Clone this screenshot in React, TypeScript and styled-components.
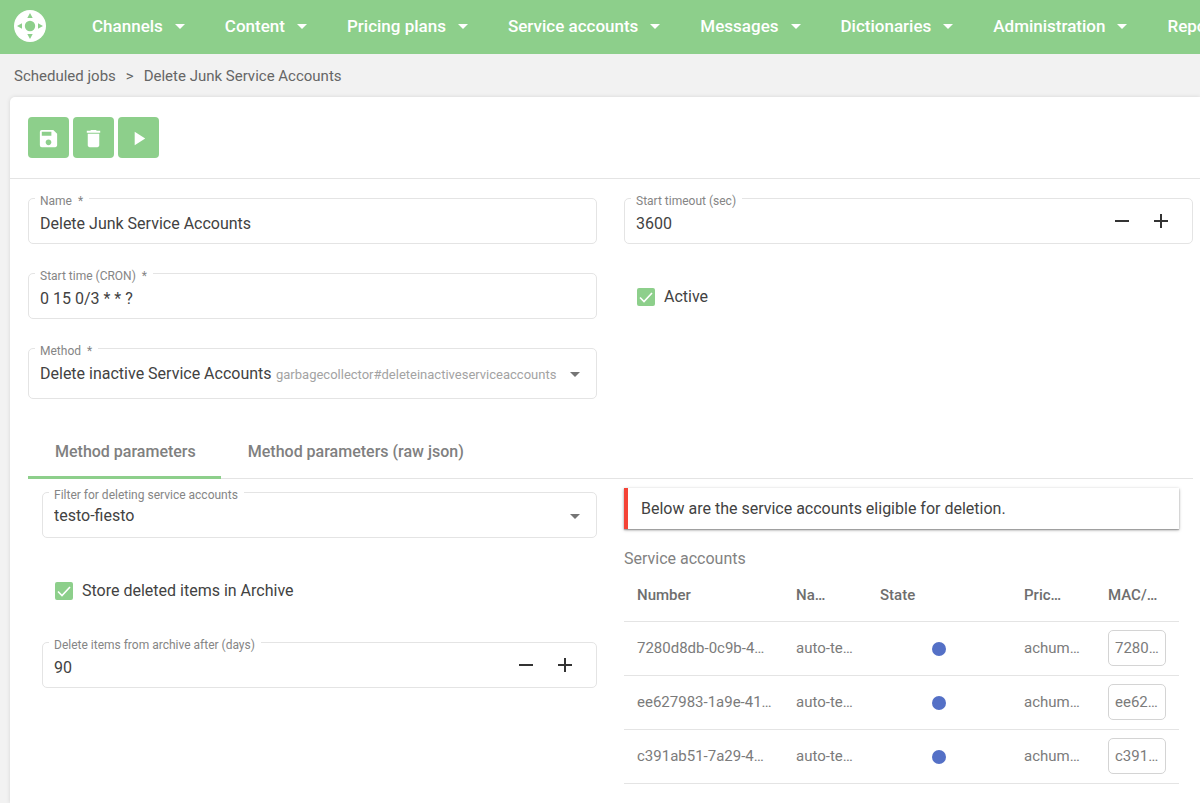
import React from 'react';
import styled, { createGlobalStyle } from 'styled-components';
import { MdSave, MdDelete, MdPlayArrow } from 'react-icons/md';

const green = '#8dcf8b';
const line = '#e4e4e4';
const ink = '#424242';
const muted = '#7b7b7b';

const GlobalStyle = createGlobalStyle`
  *, *::before, *::after { box-sizing: border-box; }
  body {
    margin: 0;
    background: #f2f2f2;
    color: ${ink};
    font-family: Roboto, "Liberation Sans", sans-serif;
    font-size: 16px;
    line-height: 24px;
  }
  button, input, select { font: inherit; color: inherit; }
`;

const Page = styled.div`
  min-height: 100vh;
  display: flex;
  flex-direction: column;
`;

const Header = styled.header`
  height: 54px;
  padding: 0 0 3px 14px;
  display: flex;
  align-items: center;
  gap: 46px;
  overflow: hidden;
  background: ${green};
`;

const HomeLink = styled.a`
  flex: none;
  display: flex;
`;

const Nav = styled.nav`
  display: flex;
  gap: 40px;
`;

const NavButton = styled.button`
  flex: none;
  display: flex;
  align-items: center;
  gap: 12px;
  padding: 0;
  border: 0;
  background: none;
  color: #fff;
  font-size: 17px;
  font-weight: 500;
  white-space: nowrap;
  cursor: pointer;
`;

const Caret = styled.span`
  flex: none;
  margin-top: 2px;
  border: 5px solid transparent;
  border-bottom: 0;
  border-top-color: currentColor;
  pointer-events: none;
`;

const Breadcrumb = styled.nav`
  display: flex;
  gap: 10px;
  padding: 10px 14px 9px;
  font-size: 15px;
  color: #666;
`;

const CrumbLink = styled.a`
  color: inherit;
  text-decoration: none;
`;

const Card = styled.main`
  flex: 1;
  margin-left: 10px;
  background: #fff;
  border-top-left-radius: 5px;
  box-shadow: 0 0 4px rgba(0, 0, 0, 0.12);
`;

const Toolbar = styled.div`
  display: flex;
  gap: 4px;
  padding: 20px 18px;
  border-bottom: 1px solid ${line};
`;

const ToolButton = styled.button`
  width: 41px;
  height: 41px;
  padding: 2px 0 0;
  display: flex;
  align-items: center;
  justify-content: center;
  border: 0;
  border-radius: 4px;
  background: ${green};
  color: #fff;
  cursor: pointer;
`;

const Columns = styled.div`
  display: grid;
  grid-template-columns: 1fr 1fr;
  gap: 27px;
`;

const FormGrid = styled(Columns)`
  padding: 19px 7px 0 18px;
`;

const Stack = styled.div`
  display: flex;
  flex-direction: column;
  gap: 29px;
  min-width: 0;
`;

const Box = styled.div<{ $tall?: boolean }>`
  position: relative;
  display: flex;
  align-items: center;
  height: ${p => (p.$tall ? 51 : 46)}px;
  padding: 0 12px 0 11px;
  border: 1px solid ${line};
  border-radius: 5px;
`;

const FloatingLabel = styled.label`
  position: absolute;
  top: -6px;
  left: 6px;
  padding: 0 6px 0 5px;
  background: #fff;
  color: #858585;
  font-size: 12px;
  line-height: 16px;
  white-space: pre;
`;

const TextInput = styled.input`
  flex: 1;
  min-width: 0;
  height: 100%;
  padding: 4px 0 0;
  border: 0;
  outline: 0;
  background: none;
  appearance: textfield;
  &::-webkit-inner-spin-button { display: none; }
`;

const Select = styled.select<{ $grow?: boolean }>`
  flex: ${p => (p.$grow ? 1 : 'none')};
  min-width: 0;
  height: 100%;
  padding: ${p => (p.$grow ? '2px 0 0' : 0)};
  border: 0;
  outline: 0;
  background: none;
  appearance: none;
`;

const Hint = styled.span`
  flex: 1;
  min-width: 0;
  padding: 2px 0 0 4px;
  color: #a3a3a3;
  font-size: 13px;
  white-space: nowrap;
`;

const SelectCaret = styled(Caret)`
  margin-right: 4px;
  color: #757575;
`;

const StepButton = styled.button`
  width: 39px;
  height: 40px;
  padding: 0;
  display: flex;
  align-items: center;
  justify-content: center;
  border: 0;
  background: none;
  cursor: pointer;
`;

const CheckLabel = styled.label`
  align-self: flex-start;
  display: grid;
  grid-template-columns: 18px auto;
  align-items: center;
  column-gap: 9px;
  height: 46px;
  padding: 2px 0 0 13px;
`;

const CheckBox = styled.input`
  grid-area: 1 / 1;
  appearance: none;
  width: 18px;
  height: 18px;
  margin: 0;
  border: 2px solid ${green};
  border-radius: 2px;
  &:checked { background: ${green}; }
  &:not(:checked) + svg { display: none; }
`;

const CheckMark = styled.svg`
  grid-area: 1 / 1;
  pointer-events: none;
`;

const Tabs = styled.div`
  display: flex;
  margin: 25px 7px 0 18px;
  border-bottom: 1px solid ${line};
`;

const Tab = styled.button<{ $active?: boolean }>`
  height: 55px;
  margin-bottom: -1px;
  padding: 3px 25px 0 27px;
  border: 0;
  border-bottom: 3px solid ${p => (p.$active ? green : 'transparent')};
  background: none;
  color: #808080;
  font-weight: 500;
  white-space: nowrap;
  cursor: pointer;
`;

const TabPanel = styled(Columns)`
  padding: 9px 7px 18px 18px;
`;

const ParameterStack = styled(Stack)`
  padding: 4px 0 0 14px;
`;

const Results = styled.section`
  min-width: 0;
  padding-right: 14px;
`;

const Notice = styled.p`
  margin: 0;
  padding: 9px 13px 8px;
  border-left: 4px solid #f44336;
  background: #fff;
  box-shadow: 0 1px 3px rgba(0, 0, 0, 0.35), 0 1px 1px rgba(0, 0, 0, 0.2);
`;

const Table = styled.table`
  width: 100%;
  table-layout: fixed;
  border-collapse: collapse;
  color: ${muted};
  font-size: 15px;
  text-align: left;
`;

const Caption = styled.caption`
  padding: 18px 0 0;
  color: #828282;
  font-size: 16px;
  text-align: left;
`;

const HeadCell = styled.th<{ $width?: string }>`
  width: ${p => p.$width ?? 'auto'};
  height: 50px;
  padding: 0 13px 2px;
  border-bottom: 1px solid ${line};
  color: #6e6e6e;
  font-size: 15px;
  font-weight: 500;
  white-space: nowrap;
`;

const Cell = styled.td<{ $center?: boolean }>`
  height: 54px;
  padding: 0 13px;
  border-bottom: 1px solid ${line};
  text-align: ${p => (p.$center ? 'center' : 'left')};
  white-space: nowrap;
`;

const StateDot = styled.span`
  display: inline-block;
  width: 14px;
  height: 14px;
  border-radius: 50%;
  background: #5470c6;
  vertical-align: middle;
`;

const Chip = styled.span`
  display: block;
  height: 36px;
  padding: 0 6px;
  border: 1px solid #d4d4d4;
  border-radius: 5px;
  line-height: 34px;
`;

const menu = [
  'Channels', 'Content', 'Pricing plans', 'Service accounts',
  'Messages', 'Dictionaries', 'Administration', 'Reports',
];

const accounts = [
  { number: '7280d8db-0c9b-4…', name: 'auto-te…', plan: 'achum…', mac: '7280…' },
  { number: 'ee627983-1a9e-41…', name: 'auto-te…', plan: 'achum…', mac: 'ee62…' },
  { number: 'c391ab51-7a29-4…', name: 'auto-te…', plan: 'achum…', mac: 'c391…' },
];

function Logo() {
  return (
    <svg width="32" height="32" viewBox="0 0 32 32" aria-hidden="true">
      <circle cx="16" cy="16" r="16" fill="#fff" />
      <g fill={green}>
        <circle cx="16" cy="16" r="5.2" />
        <path d="M16 3l2.7 5h-5.4zM16 29l2.7-5h-5.4zM3 16l5-2.7v5.4zM29 16l-5-2.7v5.4z" />
      </g>
    </svg>
  );
}

function NumberField({ id, label, initial }: { id: string; label: string; initial: number }) {
  const [value, setValue] = React.useState(initial);
  return (
    <Box>
      <FloatingLabel htmlFor={id}>{label}</FloatingLabel>
      <TextInput id={id} type="number" value={value} onChange={e => setValue(Number(e.target.value))} />
      <StepButton type="button" aria-label={`Decrease ${label}`} onClick={() => setValue(value - 1)}>
        <svg width="14" height="14" viewBox="0 0 14 14"><path d="M0 7h14" stroke="#333" strokeWidth="2" /></svg>
      </StepButton>
      <StepButton type="button" aria-label={`Increase ${label}`} onClick={() => setValue(value + 1)}>
        <svg width="14" height="14" viewBox="0 0 14 14"><path d="M0 7h14M7 0v14" stroke="#333" strokeWidth="2" /></svg>
      </StepButton>
    </Box>
  );
}

function TextField({ id, label, initial }: { id: string; label: string; initial: string }) {
  return (
    <Box>
      <FloatingLabel htmlFor={id}>{label}</FloatingLabel>
      <TextInput id={id} type="text" defaultValue={initial} />
    </Box>
  );
}

function Check({ label }: { label: string }) {
  return (
    <CheckLabel>
      <CheckBox type="checkbox" defaultChecked />
      <CheckMark width="18" height="18" viewBox="0 0 18 18" aria-hidden="true">
        <path d="M3 9.5l4 4L15 5" fill="none" stroke="#fff" strokeWidth="1.6" />
      </CheckMark>
      {label}
    </CheckLabel>
  );
}

export default function App() {
  return (
    <>
      <GlobalStyle />
      <Page>
        <Header>
          <HomeLink href="#" aria-label="Home"><Logo /></HomeLink>
          <Nav>
            {menu.map(item => (
              <NavButton key={item} type="button">{item}<Caret /></NavButton>
            ))}
          </Nav>
        </Header>
        <Breadcrumb aria-label="Breadcrumb">
          <CrumbLink href="#">Scheduled jobs</CrumbLink>
          <span>&gt;</span>
          <span>Delete Junk Service Accounts</span>
        </Breadcrumb>
        <Card>
          <Toolbar>
            <ToolButton type="button" aria-label="Save"><MdSave size={23} /></ToolButton>
            <ToolButton type="button" aria-label="Delete"><MdDelete size={23} /></ToolButton>
            <ToolButton type="button" aria-label="Run"><MdPlayArrow size={23} /></ToolButton>
          </Toolbar>
          <FormGrid>
            <Stack>
              <TextField id="name" label="Name  *" initial="Delete Junk Service Accounts" />
              <TextField id="cron" label="Start time (CRON)  *" initial="0 15 0/3 * * ?" />
              <Box $tall>
                <FloatingLabel htmlFor="method">Method  *</FloatingLabel>
                <Select id="method">
                  <option>Delete inactive Service Accounts</option>
                </Select>
                <Hint>garbagecollector#deleteinactiveserviceaccounts</Hint>
                <SelectCaret />
              </Box>
            </Stack>
            <Stack>
              <NumberField id="timeout" label="Start timeout (sec)" initial={3600} />
              <Check label="Active" />
            </Stack>
          </FormGrid>
          <Tabs role="tablist">
            <Tab type="button" role="tab" aria-selected="true" $active>Method parameters</Tab>
            <Tab type="button" role="tab" aria-selected="false">Method parameters (raw json)</Tab>
          </Tabs>
          <TabPanel role="tabpanel">
            <ParameterStack>
              <Box>
                <FloatingLabel htmlFor="filter">Filter for deleting service accounts</FloatingLabel>
                <Select id="filter" $grow>
                  <option>testo-fiesto</option>
                </Select>
                <SelectCaret />
              </Box>
              <Check label="Store deleted items in Archive" />
              <NumberField id="archive-days" label="Delete items from archive after (days)" initial={90} />
            </ParameterStack>
            <Results>
              <Notice>Below are the service accounts eligible for deletion.</Notice>
              <Table>
                <Caption>Service accounts</Caption>
                <thead>
                  <tr>
                    <HeadCell>Number</HeadCell>
                    <HeadCell $width="84px">Na…</HeadCell>
                    <HeadCell $width="144px">State</HeadCell>
                    <HeadCell $width="84px">Pric…</HeadCell>
                    <HeadCell $width="84px">MAC/…</HeadCell>
                  </tr>
                </thead>
                <tbody>
                  {accounts.map(a => (
                    <tr key={a.number}>
                      <Cell>{a.number}</Cell>
                      <Cell>{a.name}</Cell>
                      <Cell $center><StateDot role="img" aria-label="Active" /></Cell>
                      <Cell>{a.plan}</Cell>
                      <Cell><Chip>{a.mac}</Chip></Cell>
                    </tr>
                  ))}
                </tbody>
              </Table>
            </Results>
          </TabPanel>
        </Card>
      </Page>
    </>
  );
}
